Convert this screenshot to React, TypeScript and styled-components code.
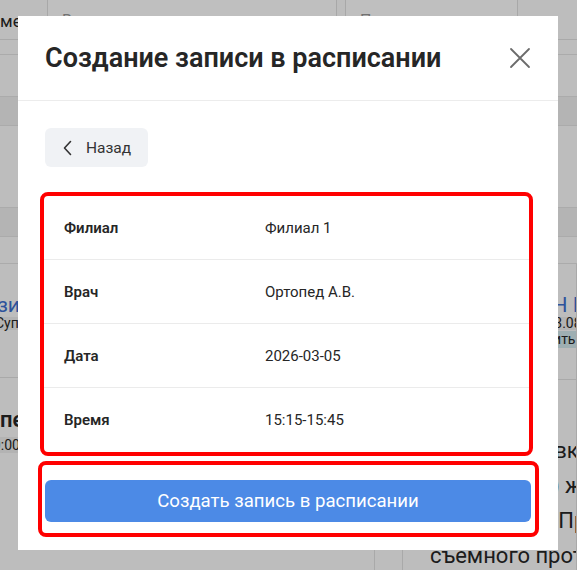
import { Fragment } from 'react';
import styled, { createGlobalStyle } from 'styled-components';

const GlobalStyle = createGlobalStyle`
    html, body {
        margin: 0;
        padding: 0;
        width: 577px;
        height: 570px;
        overflow: hidden;
        font-family: Roboto, "Liberation Sans", Arial, sans-serif;
        color: #262626;
    }
`;

// ---- page behind the modal ----

const Page = styled.div`
    width: 577px;
    height: 570px;
    background: #fdfdfd;
    overflow: hidden;
`;

const FilterBar = styled.div`
    display: flex;
    align-items: flex-start;
    gap: 8px;
    height: 40px;
    border-bottom: 1px solid #e2e2e2;
    box-sizing: border-box;
`;

const FilterLabel = styled.div`
    margin-left: -11px;
    width: 50px;
    padding-top: 11px;
    font-size: 17px;
    white-space: nowrap;
`;

const FilterInput = styled.div<{ $width: number }>`
    width: ${p => p.$width}px;
    height: 34px;
    margin-top: -4px;
    border: 1px solid #e0e0e0;
    border-radius: 0 0 8px 8px;
    background: #ffffff;
    padding: 14px 0 0 14px;
    box-sizing: border-box;
    font-size: 16px;
    color: #999;
`;

const Band = styled.div<{ $height: number; $dark?: boolean }>`
    height: ${p => p.$height}px;
    background: ${p => (p.$dark ? '#f0f0f0' : '#fdfdfd')};
    border-bottom: 1px solid #e4e4e4;
    box-sizing: border-box;
`;

const Columns = styled.div`
    display: grid;
    grid-template-columns: 375px 28px 1fr;
    height: 306px;
`;

const Column = styled.div<{ $shift?: number }>`
    display: flex;
    flex-direction: column;
    margin-left: ${p => p.$shift ?? 0}px;
    padding-top: 30px;
    border-right: 1px solid #e2e2e2;
    overflow: hidden;
`;

const Gutter = styled.div`
    border-right: 1px solid #e2e2e2;
`;

const DoctorName = styled.div<{ $indent: number }>`
    height: 22px;
    font-size: 21px;
    line-height: 22px;
    color: #3d6fd0;
    white-space: nowrap;
    padding-left: ${p => p.$indent}px;
`;

const Tag = styled.span<{ $tone?: 'gray' | 'teal'; $indent: number; $height?: number }>`
    align-self: flex-start;
    margin: 1px 0 0 ${p => p.$indent}px;
    padding: 0 4px;
    font-size: 14px;
    line-height: ${p => p.$height ?? 13}px;
    white-space: nowrap;
    background: ${p => (p.$tone === 'teal' ? '#d3eaee' : '#efefef')};
`;

const CardDivider = styled.div<{ $gap: number }>`
    flex: none;
    height: 1px;
    background: #e2e2e2;
    margin-top: ${p => p.$gap}px;
`;

const Service = styled.div<{ $indent: number }>`
    font-size: 22px;
    line-height: 32px;
    padding-left: ${p => p.$indent}px;
    font-weight: 600;
    white-space: nowrap;
    margin-top: 26px;
`;

const ServiceLines = styled.div`
    padding: 53px 0 0 27px;
    font-size: 22px;
    line-height: 35px;
    white-space: nowrap;
`;

// ---- overlay and modal ----

const Overlay = styled.div`
    position: fixed;
    inset: 0;
    background: rgba(0, 0, 0, 0.25);
    display: flex;
    align-items: flex-start;
`;

const Modal = styled.div`
    margin: 16px 0 0 18px;
    width: 540px;
    height: 534px;
    background: #ffffff;
    display: flex;
    flex-direction: column;
`;

const Header = styled.div`
    display: flex;
    align-items: center;
    justify-content: space-between;
    height: 84px;
    padding: 0 27px 0 27px;
    border-bottom: 1px solid #ececec;
`;

const Title = styled.h2`
    margin: 0;
    font-size: 27px;
    font-weight: 600;
    color: #262626;
`;

const CloseButton = styled.button`
    border: none;
    background: none;
    padding: 0;
    width: 22px;
    height: 22px;
    display: flex;
    cursor: pointer;
`;

const Body = styled.div`
    display: flex;
    flex-direction: column;
    padding: 27px 27px 0 27px;
`;

const BackButton = styled.button`
    align-self: flex-start;
    display: flex;
    align-items: center;
    gap: 14px;
    height: 39px;
    margin-bottom: 25px;
    padding: 0 17px 0 18px;
    border: none;
    border-radius: 6px;
    background: #f0f2f5;
    font-family: inherit;
    font-size: 15.5px;
    color: #333;
    cursor: pointer;
`;

const Highlight = styled.div`
    border: 4px solid #ff0000;
    border-radius: 8px;
    margin: 0 -2px 0 -5px;
`;

const InfoTable = styled.div`
    display: grid;
    grid-template-columns: 201px 1fr;
`;

const Cell = styled.div<{ $label?: boolean; $last?: boolean }>`
    height: 64px;
    display: flex;
    align-items: center;
    padding-left: 20px;
    font-size: 15px;
    font-weight: ${p => (p.$label ? 600 : 400)};
    color: #262626;
    border-bottom: ${p => (p.$last ? 'none' : '1px solid #ebebeb')};
    box-sizing: border-box;
`;

const SubmitFrame = styled.div`
    margin: 5px -8px 0 -7px;
    padding: 15px 4px 11px 3px;
    border: 4px solid #ff0000;
    border-radius: 8px;
`;

const SubmitButton = styled.button`
    width: 100%;
    height: 42px;
    border: none;
    border-radius: 6px;
    background: #4c8ae6;
    color: #ffffff;
    font-family: inherit;
    font-size: 18.6px;
    cursor: pointer;
`;

const rows = [
    ['Филиал', 'Филиал 1'],
    ['Врач', 'Ортопед А.В.'],
    ['Дата', '2026-03-05'],
    ['Время', '15:15-15:45'],
];

export default function App() {
    return (
        <>
            <GlobalStyle />
            <Page>
                <FilterBar>
                    <FilterLabel>Смена</FilterLabel>
                    <FilterInput $width={290}>Врач</FilterInput>
                    <FilterInput $width={173}>Пациент</FilterInput>
                </FilterBar>
                <Band $height={15} />
                <Band $height={42} />
                <Band $height={29} $dark />
                <Band $height={82} />
                <Band $height={29} $dark />
                <Band $height={27} />
                <Columns>
                    <Column $shift={-60}>
                        <DoctorName $indent={32}>Визит</DoctorName>
                        <Tag $indent={51}>Супрун</Tag>
                        <CardDivider $gap={47} />
                        <Service $indent={10}>Ортопед</Service>
                        <Tag $indent={41} $height={16}>10:00</Tag>
                    </Column>
                    <Gutter />
                    <Column>
                        <DoctorName $indent={18}>Ортопед КЛИН П.</DoctorName>
                        <Tag $indent={120}>03.03.08</Tag>
                        <Tag $tone="teal" $indent={106} $height={17}>Оплатить</Tag>
                        <CardDivider $gap={31} />
                        <ServiceLines>
                            Перебазировка<br />
                            (лаборатор.) жесткая<br />
                            частичного: Пр<br />
                            съемного протеза
                        </ServiceLines>
                    </Column>
                </Columns>
            </Page>
            <Overlay>
                <Modal>
                    <Header>
                        <Title>Создание записи в расписании</Title>
                        <CloseButton aria-label="Закрыть">
                            <svg width="22" height="22" viewBox="0 0 22 22">
                                <path d="M2 2 L20 20 M20 2 L2 20" stroke="#6b6b6b" strokeWidth="1.8" strokeLinecap="round" />
                            </svg>
                        </CloseButton>
                    </Header>
                    <Body>
                        <BackButton>
                            <svg width="9" height="16" viewBox="0 0 9 16">
                                <path d="M7.5 1.5 L1.5 8 L7.5 14.5" fill="none" stroke="#333" strokeWidth="1.6" strokeLinecap="round" strokeLinejoin="round" />
                            </svg>
                            Назад
                        </BackButton>
                        <Highlight>
                            <InfoTable>
                                {rows.map(([label, value], i) => (
                                    <Fragment key={label}>
                                        <Cell $label $last={i === rows.length - 1}>{label}</Cell>
                                        <Cell $last={i === rows.length - 1}>{value}</Cell>
                                    </Fragment>
                                ))}
                            </InfoTable>
                        </Highlight>
                        <SubmitFrame>
                            <SubmitButton>Создать запись в расписании</SubmitButton>
                        </SubmitFrame>
                    </Body>
                </Modal>
            </Overlay>
        </>
    );
}
